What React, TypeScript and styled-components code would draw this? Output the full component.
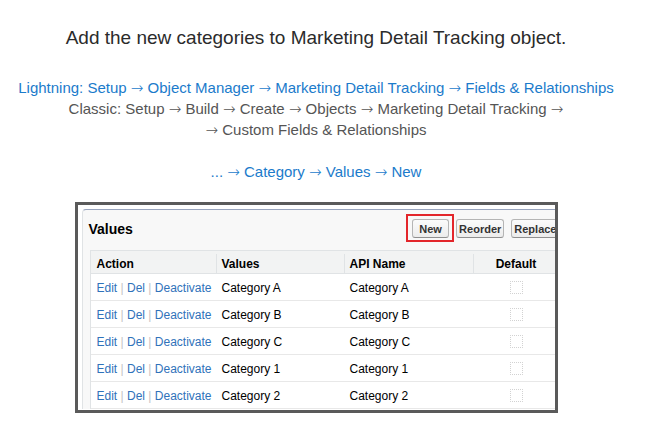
import React from "react";
import styled, { createGlobalStyle } from "styled-components";

const Global = createGlobalStyle`
  html, body { margin: 0; padding: 0; background: #fff; }
  body { font-family: "Liberation Sans", Arial, sans-serif; }
`;

const Page = styled.div`
  width: 632px;
  display: flex;
  flex-direction: column;
  align-items: center;
  padding-top: 27px;
`;

const Heading = styled.h1`
  margin: 0;
  font-size: 19px;
  line-height: 22px;
  font-weight: normal;
  color: #2b2b2b;
  text-align: center;
`;

const Intro = styled.div`
  margin-top: 28px;
  display: flex;
  flex-direction: column;
  align-items: center;
  font-size: 15px;
  line-height: 21px;
  text-align: center;
`;

const Line = styled.div<{ $blue?: boolean; $gapAbove?: boolean }>`
  height: 21px;
  color: ${(p) => (p.$blue ? "#1b7bcb" : "#555")};
  margin-top: ${(p) => (p.$gapAbove ? "21px" : "0")};
  white-space: nowrap;
`;

const Arrow = styled.span`
  font-family: "DejaVu Sans", sans-serif;
  font-weight: 200;
  line-height: 0;
`;

const Frame = styled.div`
  margin-top: 20px;
  width: 483px;
  height: 211px;
  box-sizing: border-box;
  border: 3px solid #5a5a5a;
  background: #fff;
  padding: 4px 0 0 4px;
  overflow: hidden;
`;

const Panel = styled.div`
  width: 500px;
  box-sizing: border-box;
  background: #f8f8f8;
  border-top: 1px solid #97a3bd;
  border-left: 1px solid #e0e3e5;
  border-radius: 4px 0 0 0;
  padding: 0 22px 0 7px;
`;

const PanelHeader = styled.div`
  height: 40px;
  box-sizing: border-box;
  padding-bottom: 3px;
  display: flex;
  align-items: center;
  justify-content: space-between;
`;

const Title = styled.h2`
  margin: 0 0 0 -1px;
  font-size: 14px;
  font-weight: bold;
  color: #000;
`;

const Buttons = styled.div`
  display: flex;
  gap: 7px;
  align-items: center;
`;

const Button = styled.button<{ $minWidth?: number }>`
  height: 19px;
  box-sizing: border-box;
  min-width: ${(p) => (p.$minWidth ? `${p.$minWidth}px` : "0")};
  padding: 0 2px;
  border: 1px solid #b5b5b5;
  border-bottom-color: #8f8f8f;
  border-radius: 3px;
  background: linear-gradient(#fbfbfb, #ececec);
  font-family: "Liberation Sans", Arial, sans-serif;
  font-size: 11px;
  font-weight: bold;
  color: #333;
  display: flex;
  align-items: center;
  justify-content: center;
  white-space: nowrap;
`;

const Highlight = styled.span`
  position: relative;
  display: inline-flex;
  &::after {
    content: "";
    position: absolute;
    inset: -5px -5px -4px -6px;
    border: 2px solid #e3262b;
    pointer-events: none;
  }
`;

const Table = styled.div`
  width: 470px;
  background: #fff;
  border-left: 1px solid #e0e3e5;
  box-sizing: border-box;
`;

const Row = styled.div<{ $head?: boolean }>`
  display: grid;
  grid-template-columns: 125px 128px 129px 87px;
  height: ${(p) => (p.$head ? "24px" : "27px")};
  box-sizing: border-box;
  padding-top: ${(p) => (p.$head ? "3px" : "1px")};
  background: ${(p) => (p.$head ? "#f2f3f3" : "#fff")};
  border-top: ${(p) => (p.$head ? "1px solid #e0e3e5" : "none")};
  border-bottom: 1px solid ${(p) => (p.$head ? "#e0e3e5" : "#e8e8e8")};
`;

const Cell = styled.div<{ $head?: boolean; $center?: boolean; $divider?: boolean }>`
  display: flex;
  align-items: center;
  justify-content: ${(p) => (p.$center ? "center" : "flex-start")};
  padding: 0 6px;
  font-size: 12px;
  font-weight: ${(p) => (p.$head ? "bold" : "normal")};
  color: #000;
  white-space: nowrap;
  box-shadow: ${(p) => (p.$divider && p.$head ? "inset 1px 0 0 #e0e3e5" : "none")};
`;

const ActionLink = styled.span`
  color: #2f72ba;
`;

const Sep = styled.span`
  color: #c4c4c4;
`;

const Checkbox = styled.span`
  width: 13px;
  height: 13px;
  box-sizing: border-box;
  border: 1px dotted #d2d2d2;
  border-radius: 1px;
`;

const values = ["Category A", "Category B", "Category C", "Category 1", "Category 2"];

const A = () => <Arrow>→</Arrow>;

export default function App() {
  return (
    <>
      <Global />
      <Page>
        <Heading>Add the new categories to Marketing Detail Tracking object.</Heading>
        <Intro>
          <Line $blue>
            Lightning: Setup <A /> Object Manager <A /> Marketing Detail Tracking <A /> Fields &amp; Relationships
          </Line>
          <Line>
            Classic: Setup <A /> Build <A /> Create <A /> Objects <A /> Marketing Detail Tracking <A />
          </Line>
          <Line>
            <A /> Custom Fields &amp; Relationships
          </Line>
          <Line $blue $gapAbove>
            ... <A /> Category <A /> Values <A /> New
          </Line>
        </Intro>
        <Frame>
          <Panel>
            <PanelHeader>
              <Title>Values</Title>
              <Buttons>
                <Highlight>
                  <Button $minWidth={37}>New</Button>
                </Highlight>
                <Button>Reorder</Button>
                <Button>Replace</Button>
              </Buttons>
            </PanelHeader>
            <Table>
              <Row $head>
                <Cell $head>Action</Cell>
                <Cell $head $divider>Values</Cell>
                <Cell $head $divider>API Name</Cell>
                <Cell $head $divider $center>Default</Cell>
              </Row>
              {values.map((v) => (
                <Row key={v}>
                  <Cell>
                    <ActionLink>Edit</ActionLink>
                    <Sep>&nbsp;|&nbsp;</Sep>
                    <ActionLink>Del</ActionLink>
                    <Sep>&nbsp;|&nbsp;</Sep>
                    <ActionLink>Deactivate</ActionLink>
                  </Cell>
                  <Cell>{v}</Cell>
                  <Cell>{v}</Cell>
                  <Cell $center>
                    <Checkbox />
                  </Cell>
                </Row>
              ))}
            </Table>
          </Panel>
        </Frame>
      </Page>
    </>
  );
}
